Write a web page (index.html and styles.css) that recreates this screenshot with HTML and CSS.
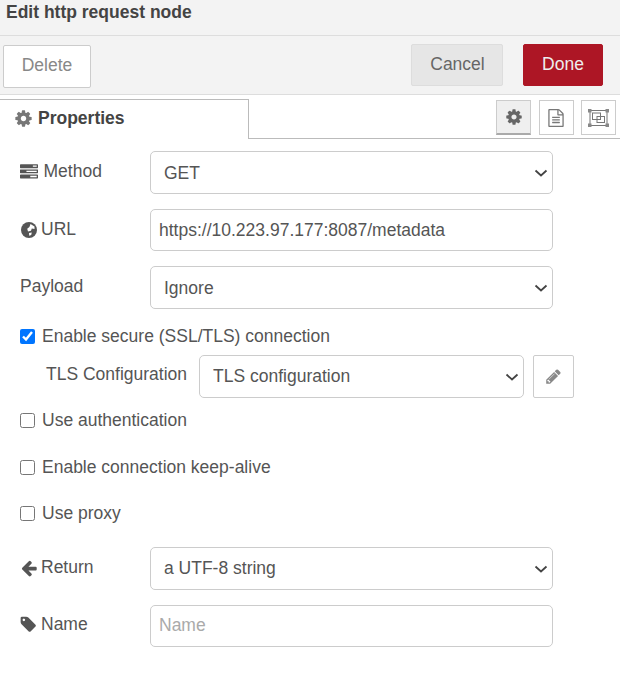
FILE: index.html
```html
<!DOCTYPE html>
<html lang="en">
<head>
<meta charset="utf-8">
<title>Edit http request node</title>
<link rel="stylesheet" href="styles.css">
</head>
<body>
<div class="tray">
  <header class="titlebar">Edit http request node</header>
  <div class="toolbar">
    <button class="btn btn-delete">Delete</button>
    <div class="toolbar-right">
      <button class="btn btn-cancel">Cancel</button>
      <button class="btn btn-done">Done</button>
    </div>
  </div>
  <div class="tabs">
    <div class="tab">
      <svg class="tab-icon" viewBox="0 0 1792 1792"><path d="M1152 896q0-106-75-181t-181-75-181 75-75 181 75 181 181 75 181-75 75-181zm512-109v222q0 12-8 23t-20 13l-185 28q-19 54-39 91 35 50 107 138 10 12 10 25t-9 23q-27 37-99 108t-94 71q-12 0-26-9l-138-108q-44 23-91 38-16 136-29 186-7 28-36 28h-222q-14 0-24.5-8.5t-11.5-21.5l-28-184q-49-16-90-37l-141 107q-10 9-25 9-14 0-25-11-126-114-165-168-7-10-7-23 0-12 8-23 15-21 51-66.5t54-70.5q-27-50-41-99l-183-27q-13-2-21-12.5t-8-23.5v-222q0-12 8-23t19-13l186-28q14-46 39-92-40-57-107-138-10-12-10-24 0-10 9-23 26-36 98.5-107.5t94.5-71.5q13 0 26 10l138 107q44-23 91-38 16-136 29-186 7-28 36-28h222q14 0 24.5 8.5t11.5 21.5l28 184q49 16 90 37l142-107q9-9 24-9 13 0 25 10 129 119 165 170 7 8 7 22 0 12-8 23-15 21-51 66.5t-54 70.5q26 50 41 98l183 28q13 2 21 12.5t8 23.5z"/></svg>
      <span>Properties</span>
    </div>
    <div class="tab-links">
      <a class="tab-link is-active"><svg class="link-icon" viewBox="0 0 1792 1792"><path d="M1152 896q0-106-75-181t-181-75-181 75-75 181 75 181 181 75 181-75 75-181zm512-109v222q0 12-8 23t-20 13l-185 28q-19 54-39 91 35 50 107 138 10 12 10 25t-9 23q-27 37-99 108t-94 71q-12 0-26-9l-138-108q-44 23-91 38-16 136-29 186-7 28-36 28h-222q-14 0-24.5-8.5t-11.5-21.5l-28-184q-49-16-90-37l-141 107q-10 9-25 9-14 0-25-11-126-114-165-168-7-10-7-23 0-12 8-23 15-21 51-66.5t54-70.5q-27-50-41-99l-183-27q-13-2-21-12.5t-8-23.5v-222q0-12 8-23t19-13l186-28q14-46 39-92-40-57-107-138-10-12-10-24 0-10 9-23 26-36 98.5-107.5t94.5-71.5q13 0 26 10l138 107q44-23 91-38 16-136 29-186 7-28 36-28h222q14 0 24.5 8.5t11.5 21.5l28 184q49 16 90 37l142-107q9-9 24-9 13 0 25 10 129 119 165 170 7 8 7 22 0 12-8 23-15 21-51 66.5t-54 70.5q26 50 41 98l183 28q13 2 21 12.5t8 23.5z"/></svg></a>
      <a class="tab-link"><svg class="link-icon link-icon-file" viewBox="0 0 1792 1792"><path d="M1596 380q28 28 48 76t20 88v1152q0 40-28 68t-68 28h-1344q-40 0-68-28t-28-68v-1600q0-40 28-68t68-28h896q40 0 88 20t76 48zm-444-244v376h376q-10-29-22-41l-313-313q-12-12-41-22zm384 1528v-1024h-416q-40 0-68-28t-28-68v-416h-768v1536h1280zm-1024-864q0-14 9-23t23-9h704q14 0 23 9t9 23v64q0 14-9 23t-23 9h-704q-14 0-23-9t-9-23v-64zm736 224q14 0 23 9t9 23v64q0 14-9 23t-23 9h-704q-14 0-23-9t-9-23v-64q0-14 9-23t23-9h704zm0 256q14 0 23 9t9 23v64q0 14-9 23t-23 9h-704q-14 0-23-9t-9-23v-64q0-14 9-23t23-9h704z"/></svg></a>
      <a class="tab-link"><svg class="link-icon-frame" viewBox="0 0 21 18"><rect class="frame-line" x="2" y="1.5" width="17" height="15"/><rect class="frame-box" x="4.5" y="4" width="8" height="6.5"/><rect class="frame-box" x="9" y="7.5" width="7.5" height="6"/><rect class="frame-dot" x="0" y="0" width="3.5" height="3.5"/><rect class="frame-dot" x="17.5" y="0" width="3.5" height="3.5"/><rect class="frame-dot" x="0" y="14.5" width="3.5" height="3.5"/><rect class="frame-dot" x="17.5" y="14.5" width="3.5" height="3.5"/></svg></a>
    </div>
  </div>
  <form class="form">
    <div class="row row-method">
      <label class="label label-method"><svg class="icon" viewBox="0 0 1792 1792"><path d="M1024 1408h640v-128h-640v128zm-384-512h1024v-128h-1024v128zm640-512h384v-128h-384v128zm512 832v256q0 26-19 45t-45 19h-1664q-26 0-45-19t-19-45v-256q0-26 19-45t45-19h1664q26 0 45 19t19 45zm0-512v256q0 26-19 45t-45 19h-1664q-26 0-45-19t-19-45v-256q0-26 19-45t45-19h1664q26 0 45 19t19 45zm0-512v256q0 26-19 45t-45 19h-1664q-26 0-45-19t-19-45v-256q0-26 19-45t45-19h1664q26 0 45 19t19 45z"/></svg>Method</label>
      <select class="field field-select"><option>GET</option></select>
    </div>
    <div class="row row-url">
      <label class="label label-url"><svg class="icon icon-globe" viewBox="0 0 16 16"><circle class="globe-disc" cx="8" cy="8" r="8"/><path class="globe-land" d="M9.5 2 13.5 4.5 13.5 7 10.8 6.6 10 8.8 7 9.4 6.2 6.8 8.4 5zM8 11 10.8 10.4 10.2 13 8.2 13.8z"/></svg>URL</label>
      <input class="field field-input" type="text" value="https://10.223.97.177:8087/metadata">
    </div>
    <div class="row row-payload">
      <label class="label">Payload</label>
      <select class="field field-select"><option>Ignore</option></select>
    </div>
    <label class="check check-secure"><input class="checkbox" type="checkbox" checked>Enable secure (SSL/TLS) connection</label>
    <div class="row row-tls">
      <label class="label label-tls">TLS Configuration</label>
      <select class="field field-select field-tls"><option>TLS configuration</option></select>
      <button type="button" class="edit-btn"><svg class="pencil" viewBox="0 0 1792 1792"><path d="M491 1536l91-91-235-235-91 91v107h128v128h107zm523-928q0-22-22-22-10 0-17 7l-542 542q-7 7-7 17 0 22 22 22 10 0 17-7l542-542q7-7 7-17zm-54-192l416 416-832 832h-416v-416zm683 96q0 53-37 90l-166 166-416-416 166-165q36-38 90-38 53 0 91 38l235 234q37 39 37 91z"/></svg></button>
    </div>
    <label class="check check-auth"><input class="checkbox" type="checkbox">Use authentication</label>
    <label class="check check-keep"><input class="checkbox" type="checkbox">Enable connection keep-alive</label>
    <label class="check check-proxy"><input class="checkbox" type="checkbox">Use proxy</label>
    <div class="row row-return">
      <label class="label label-return"><svg class="icon" viewBox="0 0 1792 1792"><path d="M1664 896v128q0 53-32.5 90.5t-84.5 37.5h-704l293 294q38 36 38 90t-38 90l-75 76q-37 37-90 37-52 0-91-37l-651-652q-37-37-37-90 0-52 37-91l651-650q38-38 91-38 52 0 90 38l75 74q38 38 38 91t-38 91l-293 293h704q52 0 84.5 37.5t32.5 90.5z"/></svg>Return</label>
      <select class="field field-select field-return"><option>a UTF-8 string</option></select>
    </div>
    <div class="row row-name">
      <label class="label label-name"><svg class="icon" viewBox="0 0 1792 1792"><path d="M512 384q0-53-37.5-90.5t-90.5-37.5-90.5 37.5-37.5 90.5 37.5 90.5 90.5 37.5 90.5-37.5 37.5-90.5zm1067 576q0 53-37 90l-491 492q-39 37-91 37-53 0-90-37l-715-716q-38-37-64.5-101t-26.5-117v-416q0-52 38-90t90-38h416q53 0 117 26.5t102 64.5l715 714q37 39 37 91z"/></svg>Name</label>
      <input class="field field-input field-name" type="text" placeholder="Name">
    </div>
  </form>
</div>
</body>
</html>
```
FILE: styles.css
```css
* { box-sizing: border-box; }
html, body { margin: 0; padding: 0; background: #fff; }
body { font-family: "Liberation Sans", Arial, sans-serif; font-size: 17.5px; color: #555; }
.tray { width: 620px; height: 687px; overflow: hidden; }
.titlebar { height: 36px; padding: 3px 6px 0; background: #f3f3f3; border-bottom: 1px solid #ddd; font-weight: bold; line-height: 19px; color: #444; }
.toolbar { height: 59px; background: #f3f3f3; border-bottom: 1px solid #ddd; display: flex; justify-content: space-between; padding: 8px 17px 0 3px; }
.toolbar-right { display: flex; gap: 20px; }
.btn { font: inherit; border-radius: 2px; padding: 0 0 2px; }
.btn-delete { width: 88px; height: 43px; margin-top: 1px; background: #fff; border: 1px solid #ccc; color: #888; }
.btn-cancel { width: 92px; height: 42px; padding-left: 1px; background: #e6e6e6; border: 1px solid #ddd; color: #666; }
.btn-done { width: 80px; height: 42px; background: #ad1625; border: 1px solid #ad1625; color: #eee; }
.tabs { height: 44px; padding: 4px 4px 0 0; border-bottom: 1px solid #bbb; display: flex; justify-content: space-between; }
.tab { width: 249px; height: 40px; background: #fff; border: 1px solid #bbb; border-left: 0; border-bottom: 0; display: flex; align-items: center; gap: 5px; padding: 0 0 2px 14px; font-weight: bold; color: #444; }
.tab-icon { width: 19px; height: 19px; fill: #777; }
.tab-links { display: flex; gap: 7.5px; margin-top: 1px; }
.tab-link { width: 35px; height: 35px; border: 1px solid #ccc; display: flex; align-items: center; justify-content: center; background: #fff; }
.tab-link.is-active { background: #efefef; border-bottom: 2px solid #aaa; }
.link-icon { width: 18px; height: 18px; fill: #666; }
.link-icon-file { fill: #777; }
.link-icon-frame { width: 21px; height: 18px; }
.frame-line, .frame-box { fill: none; stroke: #777; stroke-width: 1; }
.frame-dot { fill: #888; }
.form { display: flow-root; padding-left: 20px; }
.row { display: flex; align-items: flex-start; }
.label { width: 130px; display: flex; align-items: center; gap: 3px; line-height: 19px; color: #555; padding-top: 11px; }
.label-method { gap: 5.5px; }
.label-url { gap: 4.5px; }
.label-name { padding-top: 10px; }
.icon { width: 18px; height: 18px; fill: #555; flex: none; }
.icon-globe { width: 16px; height: 16px; margin-left: 0.5px; }
.globe-disc { fill: #555; }
.globe-land { fill: #fff; }
.field { width: 403px; font: inherit; color: #555; background: #fff; border: 1px solid #ccc; border-radius: 5px; }
.field-select { height: 43px; padding: 0 30px 0 13px; appearance: none; background-image: url("data:image/svg+xml,%3Csvg xmlns='http://www.w3.org/2000/svg' width='14' height='8' viewBox='0 0 14 8'%3E%3Cpath d='M1.5 1.5 7 6.5 12.5 1.5' fill='none' stroke='%23444' stroke-width='1.8'/%3E%3C/svg%3E"); background-repeat: no-repeat; background-position: right 4px center; }
.field-input { height: 42px; padding: 0 8px; }
.field-name { padding-bottom: 2px; }
.field-return { padding-bottom: 2px; }
.field-input::placeholder { color: #aaa; opacity: 1; }
.row-method { margin-top: 12px; }
.row-url { margin-top: 15px; }
.row-payload { margin-top: 15px; }
.check { display: flex; align-items: center; height: 19px; color: #555; }
.checkbox { width: 15px; height: 15px; margin: 0 7px 0 0; accent-color: #0075ff; }
.check-secure { margin-top: 18px; }
.row-tls { margin-top: 9px; }
.field-tls { width: 325px; padding-bottom: 2px; }
.label-tls { width: 179px; padding: 10px 0 0 26px; }
.edit-btn { width: 41px; height: 43px; margin-left: 9px; background: #fff; border: 1px solid #ccc; border-radius: 2px; display: flex; align-items: center; justify-content: center; padding: 0; }
.pencil { width: 17px; height: 17px; fill: #888; }
.check-auth { margin-top: 13px; }
.check-keep { margin-top: 28px; }
.check-proxy { margin-top: 27px; }
.row-return { margin-top: 24px; }
.row-name { margin-top: 15px; }
```
